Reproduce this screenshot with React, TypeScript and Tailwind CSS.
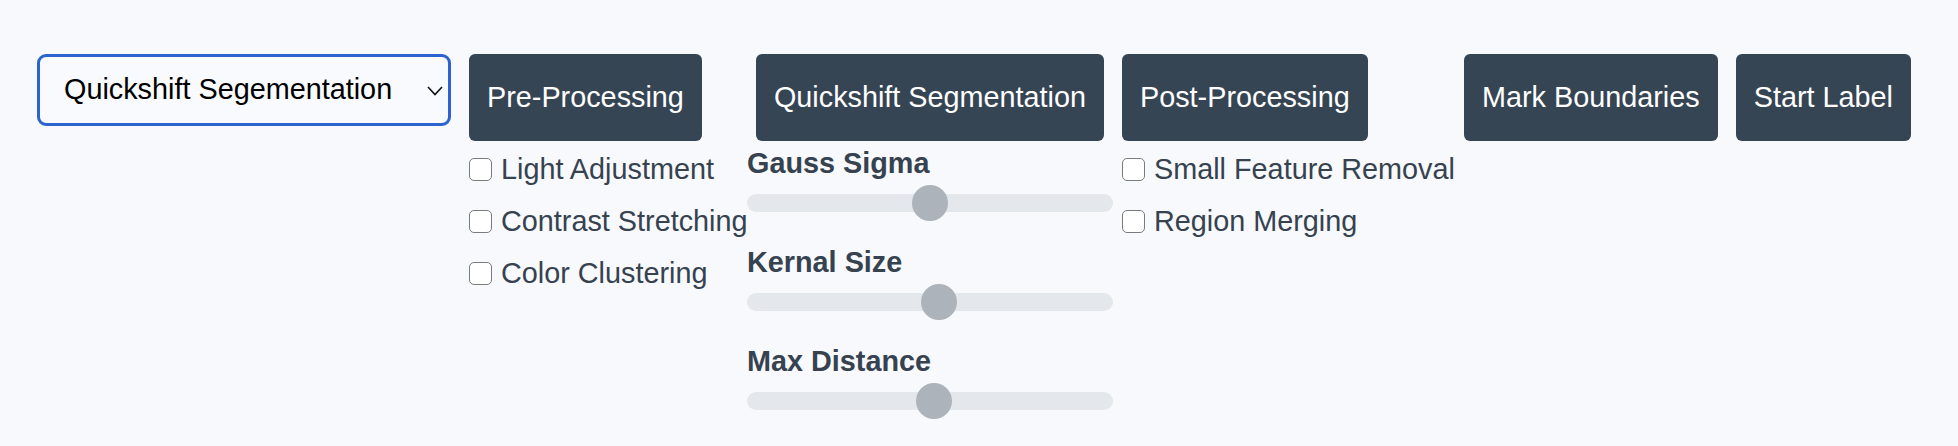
import { ChangeEvent, useState } from 'react';

const FONT = "font-['Liberation_Sans','Arial',sans-serif]";

const PRE_OPTIONS = ['Light Adjustment', 'Contrast Stretching', 'Color Clustering'];
const POST_OPTIONS = ['Small Feature Removal', 'Region Merging'];

// thumb offsets (px from track start) for each slider
const SLIDERS = [
  { label: 'Gauss Sigma', thumb: 'left-[165px]' },
  { label: 'Kernal Size', thumb: 'left-[174px]' },
  { label: 'Max Distance', thumb: 'left-[169px]' },
];

function ActionButton({ children }: { children: string }) {
  return (
    <button className="h-[87px] px-[18px] rounded-[6px] bg-[#364554] text-white text-[28.8px] leading-none whitespace-nowrap flex items-center">
      {children}
    </button>
  );
}

function CheckRow({ label }: { label: string }) {
  const [checked, setChecked] = useState(false);
  return (
    <label className="h-[52px] flex items-center gap-[9px] cursor-pointer" onClick={() => setChecked(!checked)}>
      <span className="w-[23px] h-[23px] rounded-[5px] border-[1.5px] border-[#7b7b7b] bg-white shrink-0" />
      <span className="text-[28.8px] leading-[43px] text-[#36424f] whitespace-nowrap">{label}</span>
    </label>
  );
}

function Slider({ label, thumb }: { label: string; thumb: string }) {
  return (
    <div className="w-full mb-[20px]">
      <p className="h-[43px] text-[28.8px] leading-[43px] font-bold text-[#36424f] whitespace-nowrap">{label}</p>
      <div className="relative h-[36px] flex items-center">
        <div className="w-full h-[18px] rounded-full bg-[#e4e7eb]" />
        <div className={`absolute top-0 ${thumb} w-[36px] h-[36px] rounded-full bg-[#adb3bb]`} />
      </div>
    </div>
  );
}

export default function App() {
  const [mode, setMode] = useState('quickshift');

  return (
    <div className={`min-h-screen bg-[#f7f9fc] pl-[37px] pt-[54px] ${FONT}`}>
      <div className="flex items-start">
        {/* Algorithm select */}
        <div className="relative w-[414px] h-[72px] shrink-0">
          <select
            value={mode}
            onChange={(e: ChangeEvent<HTMLSelectElement>) => setMode(e.target.value)}
            className="appearance-none w-full h-full border-[3px] border-[#2c64cf] rounded-[9px] bg-[#f8fafd] pl-[24px] pr-[40px] text-[28.8px] text-black outline-none"
          >
            <option value="quickshift">Quickshift Segementation</option>
            <option value="slic">SLIC Segmentation</option>
            <option value="felzenszwalb">Felzenszwalb Segmentation</option>
          </select>
          <svg className="absolute right-[8px] top-[32px] pointer-events-none" width="16" height="10" viewBox="0 0 16 10" fill="none">
            <polyline points="1,1 8,8.5 15,1" stroke="#111" strokeWidth="1.6" />
          </svg>
        </div>

        {/* Pre-processing */}
        <div className="ml-[18px] w-[277px] shrink-0 flex flex-col items-start">
          <ActionButton>Pre-Processing</ActionButton>
          <div className="mt-[2px]">
            {PRE_OPTIONS.map((o) => (
              <CheckRow key={o} label={o} />
            ))}
          </div>
        </div>

        {/* Quickshift params */}
        <div className="ml-px w-[366px] shrink-0 flex flex-col items-center">
          <ActionButton>Quickshift Segmentation</ActionButton>
          <div className="w-full mt-px">
            {SLIDERS.map((s) => (
              <Slider key={s.label} label={s.label} thumb={s.thumb} />
            ))}
          </div>
        </div>

        {/* Post-processing */}
        <div className="ml-[9px] w-[332px] shrink-0 flex flex-col items-start">
          <ActionButton>Post-Processing</ActionButton>
          <div className="mt-[2px]">
            {POST_OPTIONS.map((o) => (
              <CheckRow key={o} label={o} />
            ))}
          </div>
        </div>

        <div className="ml-[10px] flex gap-[18px]">
          <ActionButton>Mark Boundaries</ActionButton>
          <ActionButton>Start Label</ActionButton>
        </div>
      </div>
    </div>
  );
}
